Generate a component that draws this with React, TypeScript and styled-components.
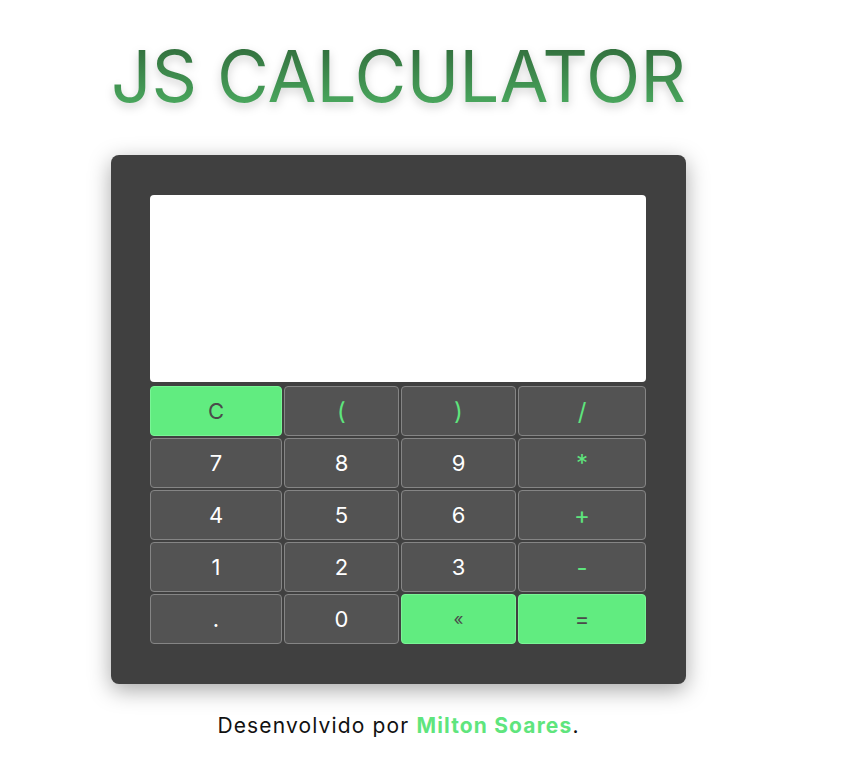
import React from "react";
import styled, { createGlobalStyle } from "styled-components";

const GlobalStyle = createGlobalStyle`
  body {
    margin: 0;
    background: #ffffff;
    font-family: "Inter", "Noto Sans", sans-serif;
  }
`;

const Page = styled.div`
  width: 575px;
  margin-left: 111px;
  display: flex;
  flex-direction: column;
  align-items: center;
`;

const Title = styled.h1`
  margin: 33px 0 0;
  font-family: "Inter", sans-serif;
  font-weight: 400;
  font-size: 71px;
  line-height: 86px;
  letter-spacing: 0;
  white-space: nowrap;
  background: linear-gradient(180deg, #2d6236 0%, #4fb565 100%);
  -webkit-background-clip: text;
  background-clip: text;
  color: transparent;
  filter: drop-shadow(0 4px 5px rgba(0, 0, 0, 0.18));
`;

const Panel = styled.div`
  box-sizing: border-box;
  width: 575px;
  margin-top: 36px;
  padding: 40px 40px 40px 39px;
  background: #404040;
  border-radius: 8px;
  box-shadow: 0 6px 22px rgba(0, 0, 0, 0.35);
`;

const Display = styled.div`
  width: 496px;
  height: 187px;
  background: #ffffff;
  border-radius: 4px;
  margin-bottom: 4px;
`;

const Keys = styled.div`
  display: grid;
  grid-template-columns: 132px 115px 115px 128px;
  grid-auto-rows: 50px;
  gap: 2px;
`;

const Key = styled.button<{ $accent?: boolean; $op?: boolean; $small?: boolean }>`
  box-sizing: border-box;
  border: 1px solid ${(p) => (p.$accent ? "#7af596" : "#858585")};
  border-radius: 4px;
  background: ${(p) => (p.$accent ? "#61ec80" : "#535353")};
  color: ${(p) => (p.$accent ? "#4a4a4a" : p.$op ? "#5ee57d" : "#ffffff")};
  font-family: "Inter", sans-serif;
  font-size: ${(p) => (p.$small ? "17px" : p.$op ? "24px" : "22px")};
  font-weight: 400;
  padding: 0;
  cursor: pointer;
`;

const Footer = styled.p`
  margin: 29px 0 0;
  font-family: "Inter", sans-serif;
  font-size: 21px;
  letter-spacing: 1.15px;
  color: #111111;
`;

const Author = styled.span`
  color: #5fe57d;
  font-weight: 700;
`;

const keys: { label: string; accent?: boolean; op?: boolean; small?: boolean }[] = [
  { label: "C", accent: true },
  { label: "(", op: true },
  { label: ")", op: true },
  { label: "/", op: true },
  { label: "7" },
  { label: "8" },
  { label: "9" },
  { label: "*", op: true },
  { label: "4" },
  { label: "5" },
  { label: "6" },
  { label: "+", op: true },
  { label: "1" },
  { label: "2" },
  { label: "3" },
  { label: "-", op: true },
  { label: "." },
  { label: "0" },
  { label: "«", accent: true, small: true },
  { label: "=", accent: true },
];

const App = () => {
  return (
    <>
      <GlobalStyle />
      <Page>
        <Title>JS CALCULATOR</Title>
        <Panel>
          <Display />
          <Keys>
            {keys.map((k) => (
              <Key key={k.label} $accent={k.accent} $op={k.op} $small={k.small}>
                {k.label}
              </Key>
            ))}
          </Keys>
        </Panel>
        <Footer>
          Desenvolvido por <Author>Milton Soares</Author>.
        </Footer>
      </Page>
    </>
  );
};

export default App;
